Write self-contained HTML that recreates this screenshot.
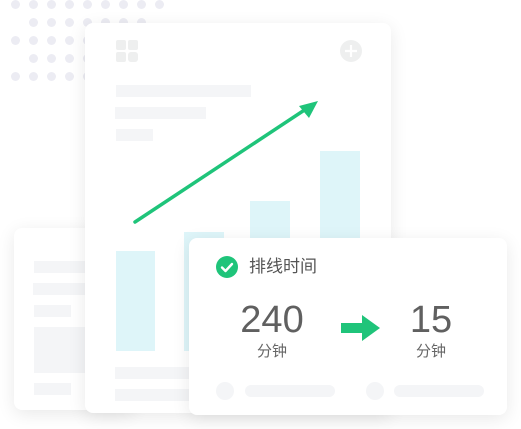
<!DOCTYPE html>
<html><head><meta charset="utf-8"><style>
*{margin:0;padding:0;box-sizing:border-box}
body{width:521px;height:429px;background:#fff;position:relative;overflow:hidden;font-family:"Liberation Sans","Noto Sans CJK SC",sans-serif}
.a{position:absolute}
.card{position:absolute;background:#fff;border-radius:8px;box-shadow:0 4px 18px rgba(0,0,0,.09)}
.g{position:absolute;background:#f4f5f7}
.b{position:absolute;background:#def5f9}
.dot{position:absolute;width:9px;height:9px;border-radius:50%;background:#ececf3}
</style></head><body>
<div id="dots"></div>
<script>
var rows=[[4,15,159],[22,33,141],[40,15,141],[58,33,141],[76,15,141]];var h='';
rows.forEach(function(r){for(var x=r[1];x<=r[2];x+=18)h+='<div class="dot" style="left:'+(x-4.5)+'px;top:'+(r[0]-4.5)+'px"></div>';});
document.getElementById('dots').innerHTML=h;
</script>
<div class="card" style="left:14px;top:228px;width:120px;height:182px">
<div class="g" style="left:20px;top:33px;width:80px;height:12px"></div>
<div class="g" style="left:19px;top:55px;width:80px;height:12px"></div>
<div class="g" style="left:20px;top:77px;width:37px;height:12px"></div>
<div class="g" style="left:20px;top:99px;width:80px;height:46px"></div>
<div class="g" style="left:20px;top:155px;width:37px;height:12px"></div>
</div>
<div class="card" style="left:85px;top:23px;width:306px;height:390px">
<svg class="a" style="left:31px;top:17px" width="22" height="22"><g fill="#eeefef"><rect x="0" y="0" width="10" height="10" rx="2"/><rect x="12" y="0" width="10" height="10" rx="2"/><rect x="0" y="12" width="10" height="10" rx="2"/><rect x="12" y="12" width="10" height="10" rx="3"/></g></svg>
<svg class="a" style="left:255px;top:17px" width="22" height="22"><circle cx="11" cy="11" r="11" fill="#eeefef"/><path d="M11 5v12M5 11h12" stroke="#fff" stroke-width="2.2"/></svg>
<div class="g" style="left:31px;top:62px;width:135px;height:12px"></div>
<div class="g" style="left:30px;top:84px;width:91px;height:12px"></div>
<div class="g" style="left:31px;top:106px;width:37px;height:12px"></div>
<div class="b" style="left:31px;top:228px;width:39px;height:100px"></div>
<div class="b" style="left:99px;top:209px;width:40px;height:119px"></div>
<div class="b" style="left:165px;top:178px;width:40px;height:150px"></div>
<div class="b" style="left:235px;top:128px;width:40px;height:200px"></div>
<div class="g" style="left:30px;top:344px;width:120px;height:12px"></div>
<div class="g" style="left:30px;top:366px;width:120px;height:12px"></div>
</div>
<svg class="a" style="left:0;top:0" width="521" height="429"><path d="M135 222L306 109" stroke="#1fc47a" stroke-width="3.5" stroke-linecap="round"/><path d="M318 101L299 106L309 118Z" fill="#1fc47a"/></svg>
<div class="card" style="left:189px;top:238px;width:318px;height:177px">
<svg class="a" style="left:27px;top:18px" width="22" height="22"><circle cx="11" cy="11" r="11" fill="#1fc47a"/><path d="M6 11.5l3.5 3.5L16 8" stroke="#fff" stroke-width="2.4" fill="none" stroke-linecap="round" stroke-linejoin="round"/></svg>
<div class="a" style="left:60px;top:18px;font-size:17px;color:#555;line-height:22px">排线时间</div>
<div class="a" style="left:33px;top:60px;width:100px;text-align:center;font-size:38px;color:#606060;line-height:44px">240</div>
<div class="a" style="left:33px;top:104px;width:100px;text-align:center;font-size:15px;color:#666;line-height:20px">分钟</div>
<svg class="a" style="left:152px;top:77px" width="40" height="26"><path d="M0 8h21V0l18 13-18 13v-8H0z" fill="#1fc47a"/></svg>
<div class="a" style="left:192px;top:60px;width:100px;text-align:center;font-size:38px;color:#606060;line-height:44px">15</div>
<div class="a" style="left:192px;top:104px;width:100px;text-align:center;font-size:15px;color:#666;line-height:20px">分钟</div>
<div class="g" style="left:27px;top:144px;width:18px;height:18px;border-radius:50%"></div>
<div class="g" style="left:56px;top:147px;width:90px;height:12px;border-radius:6px"></div>
<div class="g" style="left:177px;top:144px;width:18px;height:18px;border-radius:50%"></div>
<div class="g" style="left:205px;top:147px;width:90px;height:12px;border-radius:6px"></div>
</div>
</body></html>
